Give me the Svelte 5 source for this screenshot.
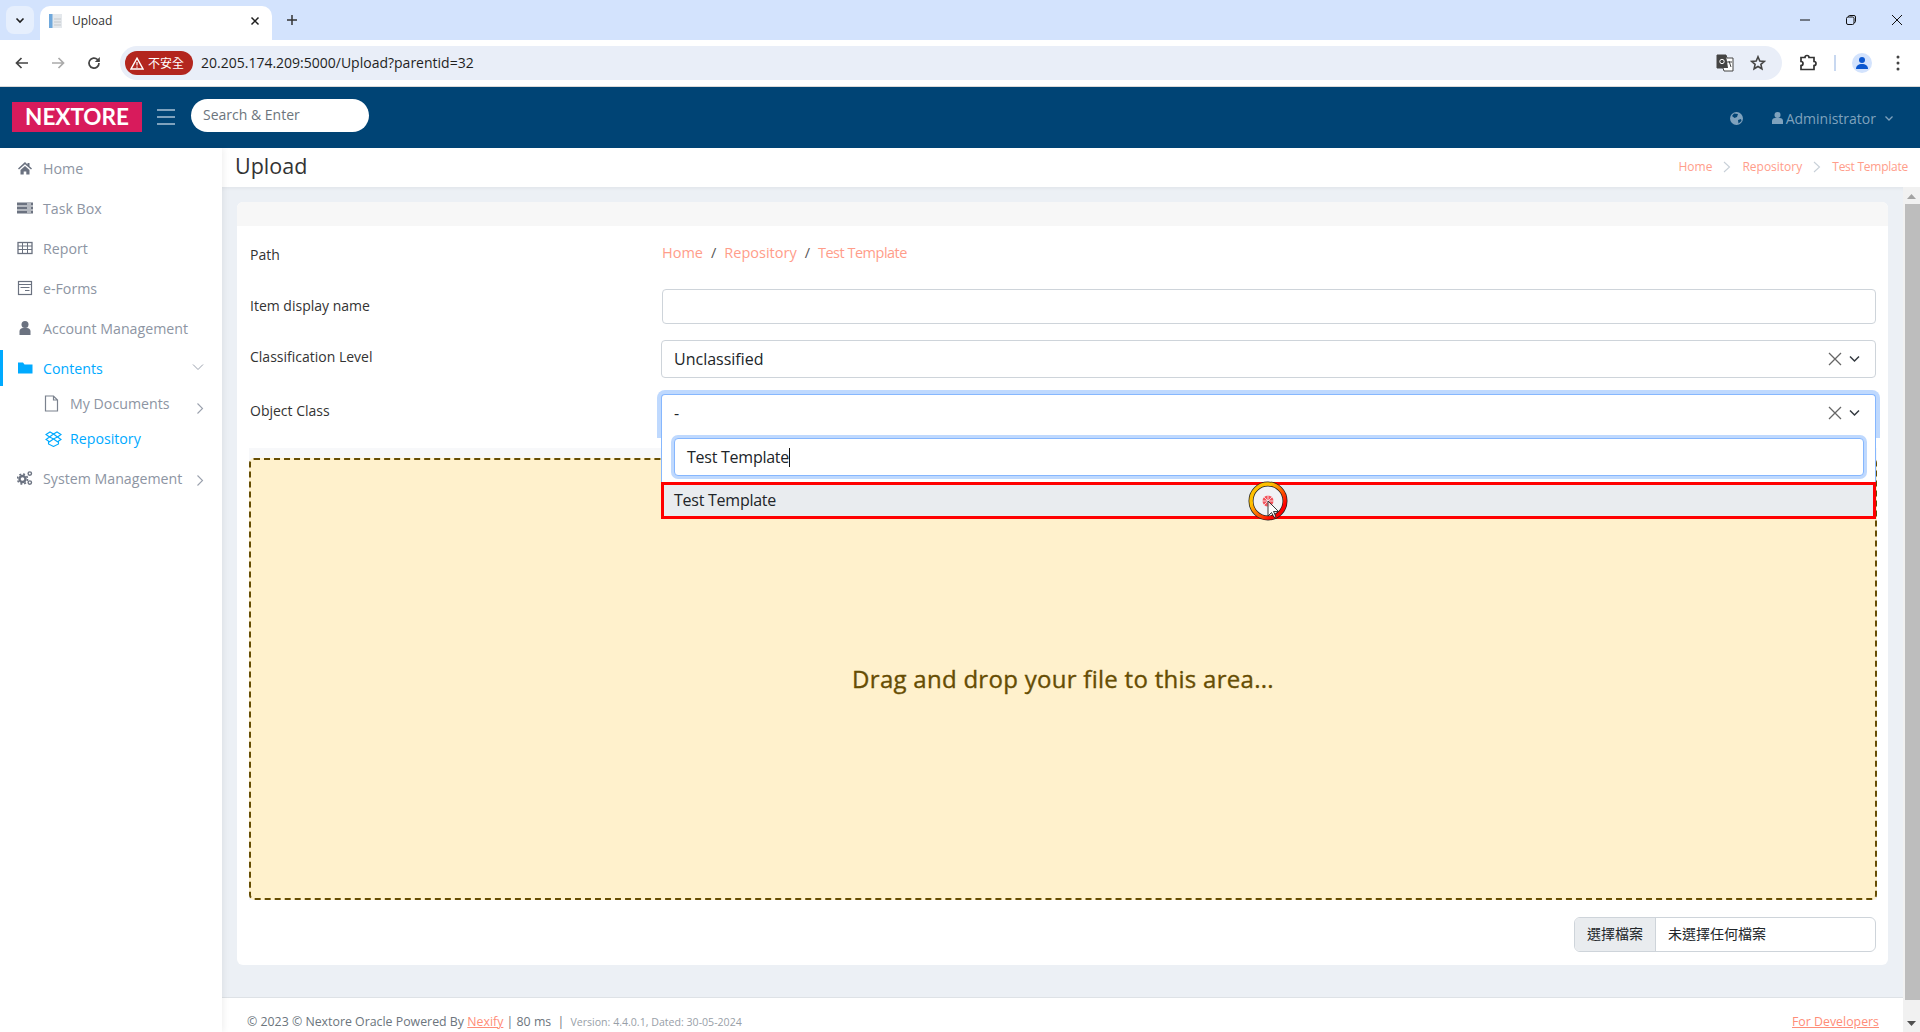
<script>
	const crumbs = ["Home", "Repository", "Test Template"];
	const menu = [
		{ label: "Home", icon: "home" },
		{ label: "Task Box", icon: "server" },
		{ label: "Report", icon: "table" },
		{ label: "e-Forms", icon: "form" },
		{ label: "Account Management", icon: "user" }
	];
</script>

<div class="page">
	<!-- browser chrome -->
	<div class="tabstrip">
		<div class="tabmenu">
			<svg width="12" height="12" viewBox="0 0 12 12"><path d="M2.5 4.5 6 8l3.500-3.500" fill="none" stroke="#1f1f1f" stroke-width="1.600" /></svg>
		</div>
		<div class="tab">
			<svg width="16" height="16" viewBox="0 0 16 16">
				<rect x="1" y="1" width="13" height="14" fill="#e4e8ec" />
				<rect x="1" y="1" width="3.500" height="14" fill="#6fa8dc" />
				<path d="M6 6h7M6 9h7M6 12h7" stroke="#c4c8cc" />
			</svg>
			<span class="tabtitle">Upload</span>
			<svg class="tabclose" width="10" height="10" viewBox="0 0 10 10"><path d="M1.500 1.500l7 7M8.500 1.500l-7 7" stroke="#1f1f1f" stroke-width="1.500" /></svg>
		</div>
		<svg class="newtab" width="12" height="12" viewBox="0 0 12 12"><path d="M6 1v10M1 6h10" stroke="#333" stroke-width="1.500" /></svg>
		<div class="winbtns">
			<svg width="12" height="12" viewBox="0 0 12 12"><path d="M1 6h10" stroke="#111" /></svg>
			<svg width="12" height="12" viewBox="0 0 12 12"><rect x="1.500" y="3" width="7.500" height="7.500" rx="1.500" fill="none" stroke="#111" /><path d="M3.500 3V2.500a1 1 0 0 1 1-1H9A1.500 1.500 0 0 1 10.500 3v4.500a1 1 0 0 1-1 1H9" fill="none" stroke="#111" /></svg>
			<svg width="12" height="12" viewBox="0 0 12 12"><path d="M1 1l10 10M11 1 1 11" stroke="#111" /></svg>
		</div>
	</div>
	<div class="toolbar">
		<svg width="16" height="16" viewBox="0 0 16 16"><path d="M14 8H3M7.500 3 2.500 8l5 5" fill="none" stroke="#444" stroke-width="1.700" /></svg>
		<svg width="16" height="16" viewBox="0 0 16 16"><path d="M2 8h11M8.500 3l5 5-5 5" fill="none" stroke="#aaa" stroke-width="1.700" /></svg>
		<svg width="16" height="16" viewBox="0 0 16 16"><path d="M13 8a5 5 0 1 1-1.500-3.500L13 6" fill="none" stroke="#444" stroke-width="1.700" /><path d="M13.800 2v5h-5z" fill="#444" /></svg>
		<div class="omnibox">
			<div class="unsafe">
				<svg width="14" height="13" viewBox="0 0 14 13"><path d="M7 1.200 13 12H1z" fill="none" stroke="#fff" stroke-width="1.400" /><path d="M7 5v3.500M7 9.500v1.200" stroke="#fff" stroke-width="1.200" /></svg>
				<span>不安全</span>
			</div>
			<span class="url">20.205.174.209:5000/Upload?parentid=32</span>
			<svg class="translate" width="18" height="18" viewBox="0 0 18 18">
				<path d="M1 1h9l1 3h6v13H8l-1-3H1z" fill="#fff" stroke="#444" />
				<path d="M1 1h9l2 13H1z" fill="#444" />
				<circle cx="6" cy="7.500" r="2.200" fill="none" stroke="#fff" />
				<path d="M11 8h5M13 7l2 6" stroke="#444" />
			</svg>
			<svg class="star" width="16" height="16" viewBox="0 0 16 16"><path d="M8 1.800 9.800 6l4.500.4-3.400 3 1 4.400L8 11.500l-3.900 2.300 1-4.400-3.400-3L6.200 6z" fill="none" stroke="#444" stroke-width="1.600" /></svg>
		</div>
		<svg class="ext" width="18" height="18" viewBox="0 0 18 18"><path d="M2 3.500h4a2 2 0 0 1 4 0h5v4a2 2 0 0 1 0 4v4H2v-4a2 2 0 0 0 0-4z" fill="none" stroke="#333" stroke-width="1.700" /></svg>
		<div class="tooldiv"></div>
		<div class="avatar">
			<svg width="14" height="14" viewBox="0 0 14 14"><circle cx="7" cy="4" r="3" fill="#0b57d0" /><path d="M1 13c0-3.500 2.500-5 6-5s6 1.500 6 5z" fill="#0b57d0" /></svg>
		</div>
		<svg class="dots" width="4" height="16" viewBox="0 0 4 16"><circle cx="2" cy="2" r="1.500" fill="#444" /><circle cx="2" cy="8" r="1.500" fill="#444" /><circle cx="2" cy="14" r="1.500" fill="#444" /></svg>
	</div>

	<!-- app header -->
	<header class="topbar">
		<div class="logo">NEXTORE</div>
		<div class="burger"><i></i><i></i><i></i></div>
		<div class="search">Search &amp; Enter</div>
		<div class="topright">
			<svg class="globe" width="13" height="13" viewBox="0 0 13 13"><circle cx="6.500" cy="6.500" r="6.500" fill="#7fa2bd" /><path d="M4 1.500 8 2 7 5 4.500 6 2 4zM8 8l3-1 .5 2-3 2.500z" fill="#004475" /></svg>
			<div class="admin">
				<svg width="11" height="12" viewBox="0 0 11 12"><circle cx="5.500" cy="3" r="3" fill="#7fa2bd" /><path d="M0 12V9c0-2 1.500-3 3-3h5c1.500 0 3 1 3 3v3z" fill="#7fa2bd" /></svg>
				<span>Administrator</span>
				<svg width="10" height="10" viewBox="0 0 10 10"><path d="M1.500 3.500 5 7l3.500-3.500" fill="none" stroke="#7fa2bd" stroke-width="1.300" /></svg>
			</div>
		</div>
	</header>

	<div class="shell">
		<aside class="sidebar">
			{#each menu as item}
				<div class="navitem">
					<svg class="navicon" width="16" height="16" viewBox="0 0 16 16">
						{#if item.icon === "home"}
							<path d="M8 2 1 8.500l1 1L8 4.200l6 5.300 1-1-2.500-2.300V3h-2v1.400zM3.500 10v4.500h3.200v-3h2.600v3h3.200V10L8 6z" fill="#6b7280" />
						{:else if item.icon === "server"}
							<path d="M0 2.500h16v3H0zM0 6.500h16v3H0zM0 10.500h16v3H0z" fill="#6b7280" /><path d="M10 4h4M10 8h4M10 12h4" stroke="#fff" />
						{:else if item.icon === "table"}
							<rect x="1" y="2.500" width="14" height="11" fill="none" stroke="#6b7280" stroke-width="1.300" /><path d="M1 6h14M1 9.500h14M5.500 2.500v11M10.500 2.500v11" stroke="#6b7280" />
						{:else if item.icon === "form"}
							<rect x="1.500" y="1.500" width="13" height="13" fill="none" stroke="#6b7280" stroke-width="1.200" /><path d="M1.500 4.500h13M3.500 7.500h9M8 10.500h4.500" stroke="#6b7280" />
						{:else}
							<circle cx="8" cy="4.500" r="3.500" fill="#6b7280" /><path d="M2.500 15v-3.500C2.500 9.500 4 8 6 8h4c2 0 3.500 1.500 3.500 3.500V15z" fill="#6b7280" />
						{/if}
					</svg>
					<span>{item.label}</span>
				</div>
			{/each}
			<div class="navitem active">
				<svg class="navicon" width="16" height="16" viewBox="0 0 16 16"><path d="M1 2.500h5l1.500 2H15.500v9H1z" fill="#00aaff" /></svg>
				<span>Contents</span>
				<svg class="caret down" width="12" height="12" viewBox="0 0 12 12"><path d="M1 3.500 6 8.500l5-5" fill="none" stroke="#9aa1ad" /></svg>
			</div>
			<div class="sublist">
				<div class="subitem">
					<svg class="subicon" width="15" height="17" viewBox="0 0 15 17"><path d="M1.500 1h8l4 4v11h-12zM9.500 1v4h4" fill="none" stroke="#7b828e" stroke-width="1.200" /></svg>
					<span>My Documents</span>
					<svg class="caret side" width="8" height="12" viewBox="0 0 8 12"><path d="M1.500 1.500 6.500 6.500l-5 5" fill="none" stroke="#9aa1ad" stroke-width="1.100" /></svg>
				</div>
				<div class="subitem blue">
					<svg class="subicon" width="17" height="16" viewBox="0 0 17 16"><path d="M8.500 3 5 1 1 3.500 4.500 6l4-3 4 3L16 3.500 12 1zM4.500 6 1 8.500l3.500 2.300 4-2.800 4 2.800L16 8.500 12.500 6 8.500 8zM3.500 10.500V13l5 2.500 5-2.500v-2.500" fill="none" stroke="#00aaff" stroke-width="1.100" /></svg>
					<span>Repository</span>
				</div>
			</div>
			<div class="navitem">
				<svg class="navicon" width="16" height="16" viewBox="0 0 16 16">
					<circle cx="5.500" cy="9" r="3" fill="none" stroke="#6b7280" stroke-width="2.400" />
					<circle cx="5.500" cy="9" r="5" fill="none" stroke="#6b7280" stroke-width="1.600" stroke-dasharray="2 1.930" />
					<circle cx="12.800" cy="3.600" r="1.700" fill="none" stroke="#6b7280" stroke-width="1.400" />
					<circle cx="12.800" cy="12.600" r="1.700" fill="none" stroke="#6b7280" stroke-width="1.400" />
				</svg>
				<span>System Management</span>
				<svg class="caret sys" width="8" height="12" viewBox="0 0 8 12"><path d="M1.500 1.500 6.500 6.500l-5 5" fill="none" stroke="#9aa1ad" stroke-width="1.100" /></svg>
			</div>
		</aside>

		<div class="mainwrap">
			<div class="titlebar">
				<h1>Upload</h1>
				<nav class="topcrumbs">
					{#each crumbs as c, i}
						{#if i > 0}
							<svg width="8" height="12" viewBox="0 0 8 12"><path d="M1 1l5.500 5L1 11" fill="none" stroke="#c8d0d8" stroke-width="1.100" /></svg>
						{/if}
						<span class:tight={i === 2}>{c}</span>
					{/each}
				</nav>
			</div>
			<div class="scrollrow">
				<main class="content">
					<div class="card">
						<div class="cardhead"></div>
						<div class="cardbody">
							<div class="row path">
								<div class="lab">Path</div>
								<div class="field pathcrumbs">
									<span>Home</span><em>/</em><span>Repository</span><em>/</em><span class="tight">Test Template</span>
								</div>
							</div>
							<div class="row name">
								<div class="lab">Item display name</div>
								<div class="field"><div class="input"></div></div>
							</div>
							<div class="row level">
								<div class="lab">Classification Level</div>
								<div class="field">
									<div class="select">
										<span>Unclassified</span>
										<svg class="clear" width="14" height="14" viewBox="0 0 14 14"><path d="M1 1l12 12M13 1 1 13" stroke="#666" stroke-width="1.300" /></svg>
										<svg class="chev" width="11" height="8" viewBox="0 0 11 8"><path d="M1 1.500 5.500 6 10 1.500" fill="none" stroke="#343a40" stroke-width="1.500" /></svg>
									</div>
								</div>
							</div>
							<div class="row objclass">
								<div class="lab">Object Class</div>
								<div class="field">
									<div class="select open">
										<span>-</span>
										<svg class="clear" width="14" height="14" viewBox="0 0 14 14"><path d="M1 1l12 12M13 1 1 13" stroke="#666" stroke-width="1.300" /></svg>
										<svg class="chev" width="11" height="8" viewBox="0 0 11 8"><path d="M1 1.500 5.500 6 10 1.500" fill="none" stroke="#343a40" stroke-width="1.500" /></svg>
									</div>
									<div class="dropdown">
										<div class="searchbox"><span class="tight">Test Template</span><i class="caretbar"></i></div>
										<div class="option">
											<span class="tight">Test Template</span>
											<div class="clickmark">
												<svg width="40" height="40" viewBox="0 0 40 40">
													<defs>
														<linearGradient id="ring" x1="0" y1="0" x2="1" y2="1">
															<stop offset="0.300" stop-color="#ffc000" />
															<stop offset="0.800" stop-color="#f00" />
														</linearGradient>
													</defs>
													<circle cx="20" cy="20" r="17" fill="#f1f2f5" stroke="#222" stroke-width="5" />
													<circle cx="20" cy="20" r="17" fill="none" stroke="url(#ring)" stroke-width="3.500" />
													<circle cx="20" cy="20" r="5.500" fill="#f4515a" />
													<path d="M20 14v12M14 20h12M16 16l8 8M24 16l-8 8" stroke="#f1f2f5" stroke-width="0.800" />
													<path d="M20 20v15l3.500-3.500 2.500 5 2-1-2.500-5h5z" fill="#fff" fill-opacity="0.800" stroke="#222" stroke-width="0.900" />
												</svg>
											</div>
										</div>
									</div>
								</div>
							</div>
							<div class="dropband">
								<div class="dropzone">Drag and drop your file to this area...</div>
							</div>
							<div class="filerow">
								<div class="fileinput">
									<div class="filebtn">選擇檔案</div>
									<div class="filetext">未選擇任何檔案</div>
								</div>
							</div>
						</div>
					</div>
					<footer class="footer">
						<div>
							© 2023 © Nextore Oracle Powered By <a href="#top">Nexify </a> | 80 ms
							<span class="sep">|</span>
							<span class="version">Version: 4.4.0.1, Dated: 30-05-2024</span>
						</div>
						<a href="#top">For Developers</a>
					</footer>
				</main>
				<div class="scrollbar">
					<svg class="arrow" width="9" height="5" viewBox="0 0 9 5"><path d="M4.500 0 9 5H0z" fill="#a3a3a3" /></svg>
					<div class="thumb"></div>
					<svg class="arrow bottom" width="9" height="5" viewBox="0 0 9 5"><path d="M4.500 5 9 0H0z" fill="#505050" /></svg>
				</div>
			</div>
		</div>
	</div>
</div>

<style>
	:global(body) {
		margin: 0;
		background: #fff;
	}

	.page {
		height: 1032px;
		display: flex;
		flex-direction: column;
		overflow: hidden;
		font-family: "Open Sans", "Noto Sans CJK TC", sans-serif;
		color: #333;
	}

	.tight {
		letter-spacing: -0.25px;
	}

	/* browser */
	.tabstrip {
		height: 40px;
		flex: none;
		background: #d3e3fd;
		display: flex;
		align-items: flex-start;
		position: relative;
	}

	.tabmenu {
		width: 28px;
		height: 28px;
		margin: 6px 0 0 6px;
		background: #e6effd;
		border-radius: 8px;
		display: flex;
		align-items: center;
		justify-content: center;
	}

	.tab {
		width: 232px;
		height: 34px;
		margin: 6px 0 0 6px;
		background: #fff;
		border-radius: 10px 10px 0 0;
		display: flex;
		align-items: center;
		padding: 0 12px 5px 8px;
		box-sizing: border-box;
	}

	.tabtitle {
		margin-left: 8px;
		font-size: 12px;
		color: #333;
		flex: 1;
	}

	.newtab {
		margin: 14px 0 0 14px;
	}

	.winbtns {
		margin-left: auto;
		margin-top: 14px;
		display: flex;
		gap: 34px;
		padding-right: 17px;
	}

	.toolbar {
		height: 46px;
		flex: none;
		background: #fff;
		border-bottom: 1px solid #d9d9d9;
		display: flex;
		align-items: center;
		padding: 0 0 0 14px;
		gap: 20px;
		box-sizing: content-box;
		border-radius: 8px 8px 0 0;
		margin-top: 0;
	}

	.omnibox {
		width: 1662px;
		height: 34px;
		margin-left: -2px;
		background: #e9eef8;
		border-radius: 17px;
		display: flex;
		align-items: center;
		padding: 0 0 0 5px;
		box-sizing: border-box;
		flex: none;
		margin-right: -4px;
	}

	.unsafe {
		height: 24px;
		width: 68px;
		background: #b3261e;
		border-radius: 12px;
		color: #fff;
		font-size: 12px;
		display: flex;
		align-items: center;
		gap: 4px;
		padding-left: 5px;
		box-sizing: border-box;
	}

	.url {
		margin-left: 8px;
		font-size: 14px;
		color: #1f1f1f;
		flex: 1;
		margin-top: -2px;
	}

	.translate {
		margin-right: 16px;
	}

	.star {
		margin-right: 16px;
	}

	.ext {
		margin-left: 1px;
	}

	.tooldiv {
		width: 1.500px;
		height: 16px;
		background: #c8d8f0;
		margin: 0 0 0 -3px;
	}

	.avatar {
		width: 20px;
		height: 20px;
		background: #d3e3fd;
		border-radius: 50%;
		display: flex;
		align-items: center;
		justify-content: center;
		margin-left: -4px;
	}

	.dots {
		margin-left: 4px;
	}

	/* app header */
	.topbar {
		height: 61px;
		flex: none;
		background: #004475;
		display: flex;
		align-items: center;
		padding-left: 12px;
	}

	.logo {
		width: 130px;
		height: 30px;
		background: #d81b5c;
		color: #fff;
		font-family: "Lato", sans-serif;
		font-size: 22.500px;
		font-weight: 700;
		text-align: center;
		line-height: 30px;
		margin-top: -2px;
	}

	.burger {
		width: 18px;
		margin-left: 15px;
		display: flex;
		flex-direction: column;
		gap: 5px;
		margin-top: -1px;
	}

	.burger i {
		height: 2px;
		background: #7fa2bd;
	}

	.search {
		width: 178px;
		height: 33px;
		margin-left: 16px;
		margin-top: -4px;
		background: #fff;
		border-radius: 17px;
		font-size: 14px;
		color: #6c757d;
		line-height: 31px;
		padding-left: 12px;
		box-sizing: border-box;
	}

	.topright {
		margin-left: auto;
		display: flex;
		align-items: center;
		padding-right: 26px;
		color: #7fa2bd;
		font-size: 14px;
		margin-top: 1px;
	}

	.admin {
		display: flex;
		align-items: center;
		gap: 3px;
		margin-left: 29px;
	}

	.admin svg:last-child {
		margin-left: 5px;
	}

	.shell {
		flex: 1;
		display: flex;
		min-height: 0;
	}

	/* sidebar */
	.sidebar {
		width: 222px;
		flex: none;
		background: #fff;
		box-shadow: 2px 0 6px rgba(0, 0, 0, 0.06);
		position: relative;
		z-index: 2;
	}

	.navitem {
		height: 40px;
		display: flex;
		align-items: center;
		padding-left: 17px;
		font-size: 14.200px;
		color: #8d95a3;
		position: relative;
	}

	.navitem span {
		margin-left: 10px;
	}

	.navitem.active {
		color: #00aaff;
	}

	.navitem.active::before {
		content: "";
		position: absolute;
		left: 0;
		top: 2px;
		width: 3px;
		height: 36px;
		background: #00aaff;
	}

	.sublist {
		margin: -2px 0 2px;
	}

	.subitem {
		height: 35px;
		display: flex;
		align-items: center;
		padding-left: 44px;
		font-size: 14.200px;
		color: #8d95a3;
		position: relative;
	}

	.subitem span {
		margin-left: 11px;
	}

	.subitem.blue {
		color: #00aaff;
	}

	.subitem.blue .subicon {
		margin-left: 1px;
	}

	.subitem.blue span {
		margin-left: 8px;
	}

	.navicon {
		flex: none;
	}

	.caret {
		position: absolute;
	}

	.caret.down {
		right: 18px;
		top: 13px;
	}

	.caret.side {
		right: 18px;
		top: 16px;
	}

	.caret.sys {
		right: 18px;
		top: 16px;
	}

	/* main */
	.mainwrap {
		flex: 1;
		display: flex;
		flex-direction: column;
		min-width: 0;
	}

	.titlebar {
		height: 39px;
		flex: none;
		background: #fff;
		display: flex;
		align-items: center;
		justify-content: space-between;
		padding: 0 12px 0 13px;
	}

	h1 {
		margin: 0;
		font-size: 21.500px;
		font-weight: 400;
		color: #333;
		margin-top: -5px;
	}

	.topcrumbs {
		display: flex;
		align-items: center;
		gap: 11px;
		font-size: 12px;
		color: #ff9d8a;
		margin-top: -2px;
	}

	.scrollrow {
		flex: 1;
		display: flex;
		min-height: 0;
	}

	.content {
		flex: 1;
		background: #ecf0f5;
		padding-top: 15px;
		display: flex;
		flex-direction: column;
		box-shadow: inset 0 4px 4px -3px rgba(0, 0, 0, 0.06);
	}

	.card {
		margin: 0 15px;
		height: 763px;
		background: #fff;
		border-radius: 6px;
		flex: none;
		overflow: hidden;
	}

	.cardhead {
		height: 24px;
		background: #f7f7f7;
	}

	.cardbody {
		padding: 0 12px 0 13px;
		position: relative;
	}

	.row {
		display: flex;
		align-items: flex-start;
	}

	.lab {
		width: 412px;
		flex: none;
		font-size: 14px;
		color: #333;
		line-height: 20px;
	}

	.field {
		flex: 1;
		min-width: 0;
		position: relative;
	}

	.row.path {
		height: 63px;
		padding-top: 19px;
		box-sizing: border-box;
	}

	.pathcrumbs {
		font-size: 14.500px;
		color: #ff9d8a;
		line-height: 20px;
		margin-top: -2px;
	}

	.pathcrumbs em {
		font-style: normal;
		color: #555;
		margin: 0 8px;
	}

	.pathcrumbs .tight {
		letter-spacing: -0.5px;
	}

	.row.name {
		height: 51px;
	}

	.row.name .lab {
		padding-top: 7px;
	}

	.input {
		height: 35px;
		border: 1px solid #ced4da;
		border-radius: 4px;
		box-sizing: border-box;
		background: #fff;
	}

	.row.level {
		height: 54px;
	}

	.row.level .lab {
		padding-top: 7px;
	}

	.row.level .field {
		margin-left: -1px;
	}

	.select {
		height: 38px;
		border: 1px solid #ced4da;
		border-radius: 4px;
		box-sizing: border-box;
		display: flex;
		align-items: center;
		padding-left: 12px;
		font-size: 16px;
		color: #212529;
		background: #fff;
	}

	.select .clear {
		margin-left: auto;
	}

	.select .chev {
		margin: 0 15px 0 7px;
	}

	.row.objclass {
		height: 54px;
	}

	.row.objclass .lab {
		padding-top: 7px;
	}

	.row.objclass .field {
		margin-left: -1px;
	}

	.select.open {
		height: 44px;
		padding-bottom: 7px;
		border-color: #86b7fe;
		border-bottom: 0;
		border-radius: 4px 4px 0 0;
		box-shadow: 0 0 0 4px #bfd9fe;
		clip-path: inset(-4px -4px 0 -4px);
	}

	.dropdown {
		position: absolute;
		left: 0;
		right: 0;
		top: 44px;
		background: #fff;
		border: solid #86b7fe;
		border-width: 0 1px;
		z-index: 3;
		box-sizing: border-box;
		padding-top: 0;
	}

	.searchbox {
		height: 38px;
		margin: 0 11px 6px 12px;
		border: 1px solid #86b7fe;
		border-radius: 4px;
		box-shadow: 0 0 0 3px #bfd9fe;
		box-sizing: border-box;
		font-size: 16px;
		line-height: 36px;
		padding-left: 12px;
		color: #212529;
		background: #fff;
	}

	.caretbar {
		display: inline-block;
		width: 1px;
		height: 19px;
		background: #111;
		vertical-align: -4px;
	}

	.option {
		height: 37px;
		margin: 0 -1px;
		border: 3px solid #f00;
		background: #e9ecef;
		box-sizing: border-box;
		font-size: 16px;
		line-height: 31px;
		padding-left: 10px;
		color: #212529;
		position: relative;
	}

	.clickmark {
		position: absolute;
		left: 584px;
		top: -4px;
		width: 40px;
		height: 40px;
	}

	.dropband {
		background: #f7f8fa;
		padding-top: 10px;
		margin: 0 -1px;
	}

	.dropzone {
		height: 442px;
		padding-bottom: 2px;
		background: #fff1cc;
		border: 2px dashed #664d03;
		border-radius: 5px;
		box-sizing: border-box;
		display: flex;
		align-items: center;
		justify-content: center;
		font-size: 24px;
		letter-spacing: 0.28px;
		-webkit-text-stroke: 0.35px #664d03;
		color: #664d03;
	}

	.filerow {
		display: flex;
		justify-content: flex-end;
		margin: 17px 0 0 0;
	}

	.fileinput {
		width: 302px;
		height: 35px;
		border: 1px solid #ced4da;
		border-radius: 6px;
		box-sizing: border-box;
		display: flex;
		overflow: hidden;
		font-size: 14px;
		line-height: 31px;
		color: #212529;
	}

	.filebtn {
		width: 81px;
		background: #e9ecef;
		border-right: 1px solid #ced4da;
		text-align: center;
		box-sizing: border-box;
	}

	.filetext {
		padding-left: 12px;
	}

	.footer {
		margin-top: 32px;
		flex: 1;
		background: #fff;
		border-top: 1px solid #dee2e6;
		display: flex;
		justify-content: space-between;
		padding: 15px 24px 0 25px;
		font-size: 12.350px;
		color: #6c757d;
	}

	.footer a {
		color: #ff8d78;
		text-decoration: underline;
	}

	.sep {
		margin: 0 3px;
	}

	.version {
		font-size: 10.600px;
		color: #98a0a8;
	}

	.scrollbar {
		width: 17px;
		flex: none;
		background: #f1f1f1;
		display: flex;
		flex-direction: column;
		align-items: center;
		box-sizing: border-box;
		padding-top: 7px;
	}

	.thumb {
		width: 15px;
		height: 796px;
		margin: 5px 0 0 2px;
		background: #bdbdbd;
		flex: none;
	}

	.arrow {
		flex: none;
	}

	.arrow.bottom {
		margin-top: 21px;
	}
</style>
